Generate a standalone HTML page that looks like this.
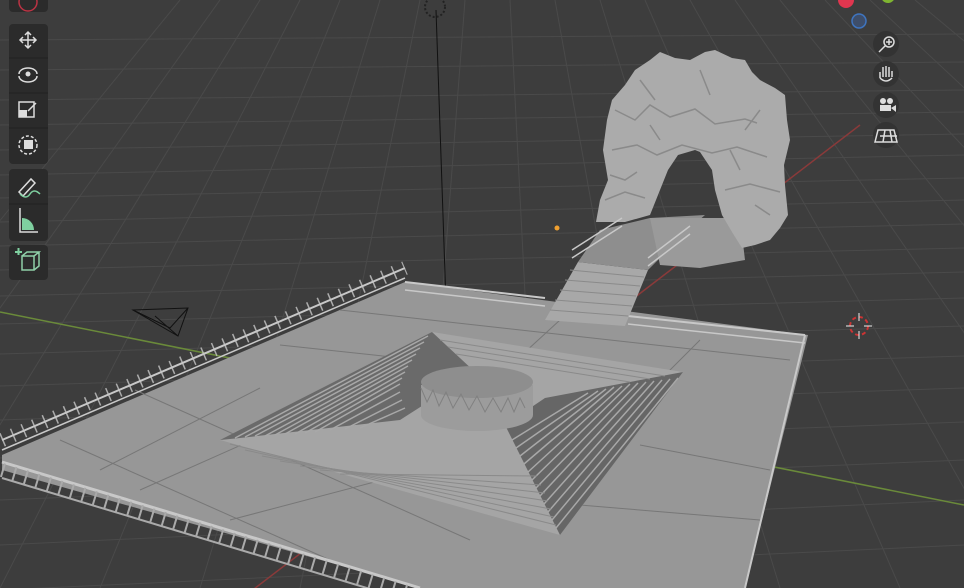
<!DOCTYPE html>
<html><head><meta charset="utf-8"><style>
html,body{margin:0;padding:0;background:#3d3d3d;width:964px;height:588px;overflow:hidden}
svg{position:absolute;left:0;top:0}
</style></head><body>
<svg width="964" height="588" viewBox="0 0 964 588" xmlns="http://www.w3.org/2000/svg">
<rect width="964" height="588" fill="#3d3d3d"/>
<!-- grid -->
<g stroke="#4a4a4a" stroke-width="1">
<line x1="0" y1="40" x2="964" y2="34"/><line x1="0" y1="70" x2="964" y2="62"/><line x1="0" y1="100" x2="964" y2="90"/>
<line x1="0" y1="125" x2="964" y2="112"/><line x1="0" y1="150" x2="964" y2="134"/><line x1="0" y1="175" x2="964" y2="155"/>
<line x1="0" y1="198" x2="964" y2="178"/><line x1="0" y1="222" x2="964" y2="200"/><line x1="0" y1="246" x2="964" y2="224"/>
<line x1="0" y1="270" x2="964" y2="248"/><line x1="0" y1="296" x2="964" y2="272"/><line x1="0" y1="324" x2="964" y2="298"/>
<line x1="0" y1="354" x2="964" y2="326"/><line x1="0" y1="386" x2="964" y2="356"/><line x1="0" y1="420" x2="964" y2="388"/>
<line x1="0" y1="458" x2="964" y2="422"/><line x1="0" y1="500" x2="964" y2="460"/><line x1="0" y1="545" x2="964" y2="500"/>
<line x1="0" y1="590" x2="964" y2="545"/>
<line x1="-300" y1="588" x2="180" y2="0"/><line x1="-200" y1="588" x2="220" y2="0"/><line x1="-100" y1="588" x2="260" y2="0"/>
<line x1="0" y1="588" x2="300" y2="0"/><line x1="100" y1="588" x2="340" y2="0"/><line x1="200" y1="588" x2="380" y2="0"/>
<line x1="300" y1="588" x2="420" y2="0"/><line x1="420" y1="588" x2="465" y2="0"/><line x1="540" y1="588" x2="510" y2="0"/>
<line x1="660" y1="588" x2="555" y2="0"/><line x1="780" y1="588" x2="600" y2="0"/><line x1="900" y1="588" x2="645" y2="0"/>
<line x1="1020" y1="588" x2="690" y2="0"/><line x1="1140" y1="588" x2="735" y2="0"/><line x1="1260" y1="588" x2="780" y2="0"/>
<line x1="1380" y1="588" x2="825" y2="0"/><line x1="1500" y1="588" x2="870" y2="0"/><line x1="1620" y1="588" x2="915" y2="0"/>
</g>
<line x1="0" y1="312" x2="964" y2="505" stroke="#6a8a3a" stroke-width="1.5"/>
<line x1="250" y1="592" x2="860" y2="125" stroke="#8a3a3a" stroke-width="1.5"/>
<!-- light line -->
<line x1="436" y1="10" x2="448" y2="362" stroke="#111" stroke-width="1"/>
<circle cx="435" cy="7" r="10" fill="none" stroke="#222" stroke-dasharray="2 2" stroke-width="2"/>
<!-- platform -->
<polygon points="2,455 405,282 808,335 745,588 420,588 2,470" fill="#979797"/>
<g stroke="#777" stroke-width="1" fill="none">
<line x1="60" y1="440" x2="330" y2="560"/><line x1="135" y1="390" x2="470" y2="540"/>
<line x1="280" y1="345" x2="420" y2="360"/><line x1="100" y1="470" x2="260" y2="388"/>
<line x1="340" y1="310" x2="790" y2="360"/><line x1="560" y1="320" x2="500" y2="375"/>
<line x1="700" y1="340" x2="640" y2="400"/><line x1="640" y1="445" x2="770" y2="470"/>
<line x1="230" y1="520" x2="420" y2="470"/><line x1="580" y1="505" x2="760" y2="520"/>
<line x1="140" y1="490" x2="320" y2="410"/>
</g>
<!-- railings -->
<g stroke="#c8c8c8" fill="none">
<line x1="2" y1="440" x2="405" y2="268" stroke-width="2"/>
<line x1="2" y1="450" x2="405" y2="278" stroke-width="1.5"/>
<line x1="2" y1="440" x2="405" y2="268" stroke-width="14" stroke-dasharray="1.5 10" opacity="0.8"/>
<line x1="405" y1="282" x2="545" y2="298" stroke-width="2"/>
<line x1="405" y1="290" x2="545" y2="306" stroke-width="1.5"/>
<line x1="628" y1="316" x2="805" y2="335" stroke-width="2"/>
<line x1="628" y1="324" x2="805" y2="343" stroke-width="1.5"/>
<line x1="805" y1="335" x2="745" y2="588" stroke-width="2"/>
<line x1="2" y1="462" x2="420" y2="588" stroke-width="3"/>
<line x1="2" y1="470" x2="420" y2="596" stroke-width="14" stroke-dasharray="2 10" stroke="#aaa"/>
<line x1="2" y1="478" x2="400" y2="598" stroke-width="2" stroke="#aaa"/>
</g>
<!-- pyramid stairs -->
<polygon points="432,332 683,372 560,535 220,440" fill="#a5a5a5"/>
<polygon points="432,332 475,372 400,420 240,438 220,440" fill="#6a6a6a"/>
<polygon points="683,372 560,535 505,425 545,398" fill="#666"/>
<g stroke="#a8a8a8" stroke-width="1.5">
<line x1="428" y1="336" x2="235" y2="438"/><line x1="424" y1="342" x2="245" y2="437"/><line x1="420" y1="348" x2="255" y2="436"/>
<line x1="416" y1="354" x2="265" y2="436"/><line x1="412" y1="360" x2="275" y2="435"/><line x1="408" y1="366" x2="285" y2="434"/>
<line x1="405" y1="372" x2="295" y2="434"/><line x1="402" y1="378" x2="305" y2="433"/><line x1="400" y1="384" x2="315" y2="432"/>
<line x1="400" y1="392" x2="330" y2="430"/><line x1="402" y1="400" x2="345" y2="429"/><line x1="405" y1="408" x2="360" y2="428"/>
<line x1="678" y1="378" x2="556" y2="528"/><line x1="670" y1="379" x2="552" y2="520"/><line x1="662" y1="380" x2="548" y2="512"/>
<line x1="654" y1="381" x2="544" y2="504"/><line x1="646" y1="382" x2="540" y2="496"/><line x1="638" y1="383" x2="536" y2="488"/>
<line x1="630" y1="384" x2="532" y2="480"/><line x1="622" y1="386" x2="528" y2="472"/><line x1="614" y1="387" x2="524" y2="464"/>
<line x1="606" y1="389" x2="520" y2="456"/><line x1="598" y1="391" x2="516" y2="448"/><line x1="588" y1="393" x2="512" y2="440"/>
</g>
<g stroke="#8a8a8a" stroke-width="1">
<line x1="230" y1="444" x2="556" y2="525"/><line x1="245" y1="450" x2="554" y2="517"/>
<line x1="262" y1="456" x2="551" y2="509"/><line x1="280" y1="461" x2="548" y2="501"/><line x1="300" y1="466" x2="545" y2="493"/>
<line x1="320" y1="470" x2="541" y2="485"/><line x1="340" y1="474" x2="537" y2="476"/>
<line x1="440" y1="340" x2="665" y2="376"/><line x1="448" y1="347" x2="650" y2="379"/><line x1="456" y1="354" x2="630" y2="382"/>
</g>
<!-- cylinder -->
<path d="M421,385 L421,415 A56,16 0 0 0 533,415 L533,385 Z" fill="#9c9c9c"/>
<ellipse cx="477" cy="382" rx="56" ry="16" fill="#8e8e8e"/>
<path d="M421,388 l6,14 l6,-12 l6,16 l7,-14 l7,16 l8,-14 l8,16 l8,-14 l8,16 l8,-14 l8,14 l7,-14 l6,14 l6,-14 l5,10" fill="none" stroke="#808080" stroke-width="1"/>
<!-- ramp and bridge -->
<polygon points="545,320 625,326 648,270 578,262" fill="#a8a8a8"/>
<g stroke="#8a8a8a"><line x1="550" y1="310" x2="628" y2="316"/><line x1="555" y1="300" x2="632" y2="306"/><line x1="560" y1="290" x2="636" y2="296"/><line x1="565" y1="280" x2="640" y2="286"/><line x1="570" y1="270" x2="644" y2="277"/></g>
<polygon points="578,262 648,270 690,228 705,215 650,218 600,230" fill="#8e8e8e"/>
<polygon points="650,218 740,218 745,260 700,268 660,265" fill="#9a9a9a"/>
<!-- arch -->
<path d="M596,222 L600,200 L608,180 L603,150 L607,120 L612,100 L625,85 L635,70 L650,60 L660,52 L675,58 L690,60 L705,52 L715,50 L732,58 L745,60 L752,72 L760,80 L775,88 L785,95 L787,120 L790,140 L784,165 L785,185 L788,215 L780,228 L770,240 L755,245 L742,248 L732,232 L722,215 L715,190 L712,170 L700,152 L695,150 L678,155 L668,170 L660,190 L654,205 L650,215 L625,222 Z" fill="#ababab"/>
<g stroke="#8a8a8a" stroke-width="1.5" fill="none">
<path d="M615,110 l10,5 l10,5 l15,-15 l20,12 l25,-8 l20,15 l30,-5 l12,4"/>
<path d="M612,150 l25,-5 l20,10 l25,-10 l30,8 l25,-6 l30,10"/>
<path d="M605,200 l20,-8 l20,6 M725,190 l25,-6 l30,8 M610,175 l15,5 l12,-8"/>
<path d="M640,80 l15,20 M700,70 l10,25 M760,110 l-15,20 M730,150 l10,20 M650,125 l10,15 M755,205 l15,10"/>
</g>
<g stroke="#c8c8c8" stroke-width="1.5" fill="none">
<path d="M572,250 l50,-32 M572,258 l50,-32"/><path d="M648,258 l42,-32 M648,266 l42,-32"/>
</g>
<!-- camera -->
<g stroke="#111" stroke-width="1" fill="none"><path d="M133,310 L188,308 L178,336 Z M133,310 L170,328 L188,308 M155,316 L178,336"/></g>
<!-- 3D cursor -->
<circle cx="859" cy="326" r="9" fill="none" stroke="#c33" stroke-width="2" stroke-dasharray="4 3"/>
<g stroke="#eee" stroke-width="1"><line x1="846" y1="326" x2="854" y2="326"/><line x1="864" y1="326" x2="872" y2="326"/><line x1="859" y1="313" x2="859" y2="321"/><line x1="859" y1="331" x2="859" y2="339"/></g>
<circle cx="557" cy="228" r="2.5" fill="#f0a030"/>
<!-- gizmo -->
<circle cx="846" cy="0" r="8" fill="#e0364f"/><circle cx="888" cy="-4" r="7" fill="#7fb531"/>
<circle cx="859" cy="21" r="7" fill="#3e4e6a" stroke="#3f75c0" stroke-width="1.5"/>
<g fill="#333"><circle cx="886" cy="44" r="13"/><circle cx="886" cy="74" r="13"/><circle cx="886" cy="105" r="13"/><circle cx="886" cy="135" r="13"/></g>
<g stroke="#ddd" fill="none" stroke-width="1.5">
<circle cx="889" cy="42" r="5"/><line x1="885" y1="46" x2="879" y2="52"/><path d="M889,39 v6 M886,42 h6"/>
<path d="M880,78 l0,-6 m3,5 l0,-10 m3,10 l0,-11 m3,11 l0,-10 m3,10 l0,-6 M880,78 q6,6 12,0"/>
<path d="M878,130 l16,0 l3,12 l-22,0 z M880,136 l17,0 M885,130 l-2,12 M890,130 l2,12"/>
</g>
<g fill="#ddd"><circle cx="883" cy="101" r="3"/><circle cx="890" cy="101" r="3"/><rect x="880" y="105" width="11" height="6"/><path d="M891,108 l5,-3 v7 z"/></g>
<!-- toolbar -->
<g fill="#2b2b2b">
<rect x="9" y="-10" width="39" height="22" rx="4"/>
<rect x="9" y="24" width="39" height="140" rx="4"/>
<rect x="9" y="169" width="39" height="72" rx="4"/>
<rect x="9" y="245" width="39" height="35" rx="4"/>
</g>
<g stroke="#222" stroke-width="1"><line x1="9" y1="58" x2="48" y2="58"/><line x1="9" y1="93" x2="48" y2="93"/><line x1="9" y1="128" x2="48" y2="128"/><line x1="9" y1="204" x2="48" y2="204"/></g>
<circle cx="28" cy="2" r="9" fill="none" stroke="#b34" stroke-width="1.5"/>
<g stroke="#ddd" stroke-width="1.5" fill="none">
<path d="M28,32 v16 M20,40 h16 M25,35 l3,-3 l3,3 M25,45 l3,3 l3,-3 M23,37 l-3,3 l3,3 M33,37 l3,3 l-3,3"/>
<path d="M19,74 a9,6 0 0 1 18,0 M37,76 a9,6 0 0 1 -18,0"/>
<rect x="19" y="102" width="15" height="15"/><path d="M28,111 l8,-8"/>
<circle cx="28" cy="145" r="9" stroke-dasharray="3 2"/>
<path d="M19,192 l12,-13 l4,4 l-12,13 z"/>
<path d="M20,208 v24 h18"/>
<path d="M22,256 l12,0 l0,14 l-12,0 z M22,256 l5,-4 l12,0 l-5,4 M34,270 l5,-4 v-14" stroke="#8fcfa8"/>
</g>
<g fill="#ddd"><rect x="19" y="110" width="8" height="7"/><rect x="24" y="140" width="9" height="9"/><circle cx="28" cy="74" r="2.5"/></g>
<path d="M20,194 q6,6 10,0 q4,-6 10,0" stroke="#7fd0a0" fill="none" stroke-width="1.5"/>
<path d="M22,230 v-12 a12,12 0 0 1 12,12 z" fill="#7fd0a0"/>
<path d="M15,252 h7 M18.5,248 v7" stroke="#7fd0a0" stroke-width="2"/>
</svg>
</body></html>
